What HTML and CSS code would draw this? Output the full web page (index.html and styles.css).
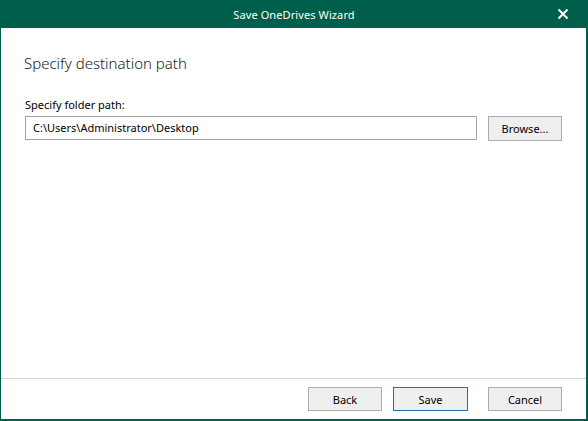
FILE: index.html
```html
<!DOCTYPE html>
<html>
<head>
<meta charset="utf-8">
<link rel="stylesheet" href="styles.css">
</head>
<body>
<div class="window">
  <div class="titlebar">
    <span class="title">Save OneDrives Wizard</span>
    <span class="close" aria-label="Close">
      <svg width="12" height="12" viewBox="0 0 12 12"><path d="M1.5 1.5 L10.5 10.5 M10.5 1.5 L1.5 10.5" stroke="#fff" stroke-width="2" fill="none"/></svg>
    </span>
  </div>
  <div class="content">
    <h1 class="heading">Specify destination path</h1>
    <div class="label">Specify folder path:</div>
    <div class="row">
      <div class="input">C:\Users\Administrator\Desktop</div>
      <div class="btn browse">Browse...</div>
    </div>
  </div>
  <div class="footer">
    <div class="btn">Back</div>
    <div class="btn primary">Save</div>
    <div class="btn cancel">Cancel</div>
  </div>
</div>
</body>
</html>
```
FILE: styles.css
```css
html, body {
  margin: 0;
  padding: 0;
  background: #fff;
}
body {
  font-family: "Noto Sans", "Open Sans", sans-serif;
  font-size: 11px;
  color: #000;
}
.window {
  width: 588px;
  height: 421px;
  box-sizing: border-box;
  border-left: 1px solid #005f4b;
  border-right: 2px solid #005f4b;
  border-bottom: 2px solid #005f4b;
  display: flex;
  flex-direction: column;
  overflow: hidden;
}
.titlebar {
  height: 28px;
  flex: none;
  background: #005f4b;
  color: #fff;
  display: flex;
  align-items: center;
  justify-content: center;
  position: relative;
  margin: 0 -2px 0 -1px;
}
.title {
  font-size: 11px;
  letter-spacing: 0.1px;
}
.close {
  position: absolute;
  right: 19px;
  top: 8px;
  width: 12px;
  height: 12px;
  display: flex;
}
.content {
  flex: 1;
  padding: 0 24px 0 23px;
}
.heading {
  margin: 25px 0 0 0;
  font-size: 15px;
  font-weight: 300;
  color: #222;
  line-height: 20px;
}
.label {
  margin-top: 24px;
  line-height: 15px;
  padding-left: 1px;
}
.row {
  display: flex;
  margin-top: 4px;
  padding-left: 1px;
}
.input {
  width: 452px;
  height: 24px;
  box-sizing: border-box;
  border: 1px solid #a6a6a6;
  padding: 0 7px;
  line-height: 22px;
  white-space: nowrap;
}
.btn {
  width: 74px;
  height: 24px;
  box-sizing: border-box;
  border: 1px solid #adadad;
  background: #efefef;
  display: flex;
  align-items: center;
  justify-content: center;
}
.browse {
  margin-left: 11px;
  height: 25px;
}
.footer {
  flex: none;
  border-top: 1px solid #d5d5d5;
  padding: 8px 24px 8px 0;
  display: flex;
  justify-content: flex-end;
}
.primary {
  margin-left: 11px;
  width: 75px;
  border-color: #1f6eaa;
}
.cancel {
  margin-left: 20px;
}
```
